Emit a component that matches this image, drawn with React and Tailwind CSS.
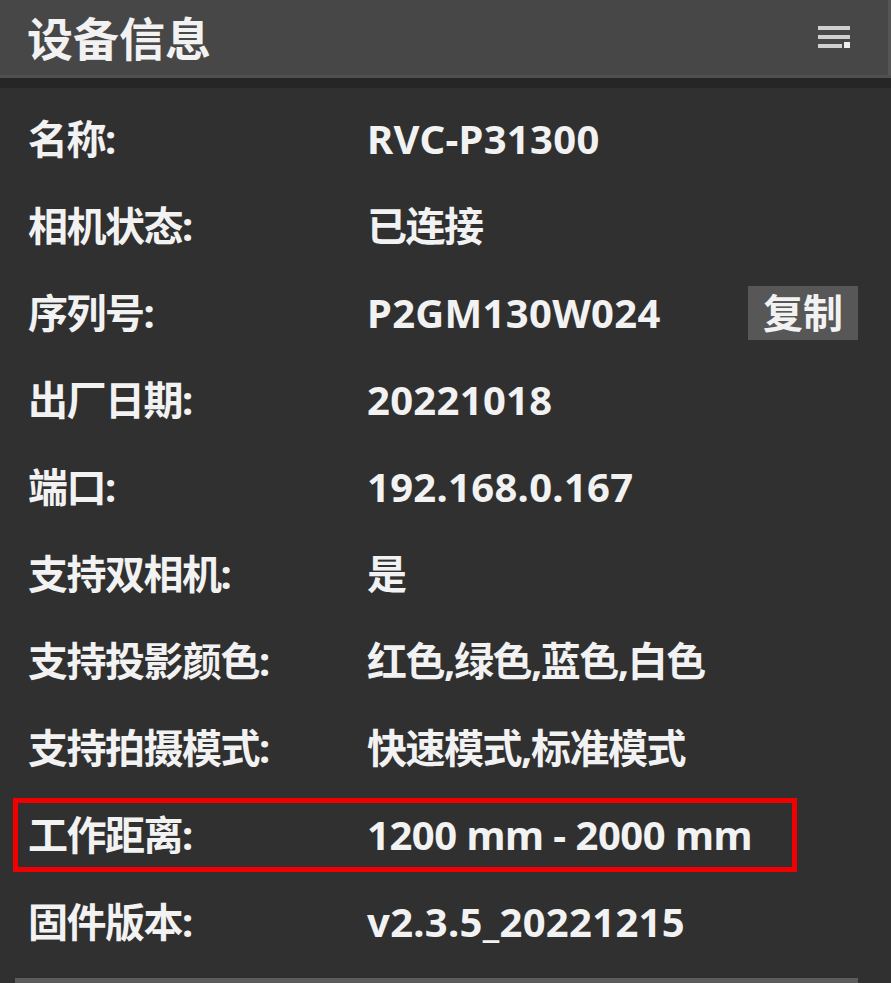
import React from 'react';

const rows = [
  { label: '名称:', value: 'RVC-P31300' },
  { label: '相机状态:', value: '已连接', cjk: true },
  { label: '序列号:', value: 'P2GM130W024', copy: true },
  { label: '出厂日期:', value: '20221018' },
  { label: '端口:', value: '192.168.0.167' },
  { label: '支持双相机:', value: '是', cjk: true },
  { label: '支持投影颜色:', value: '红色,绿色,蓝色,白色', cjk: true },
  { label: '支持拍摄模式:', value: '快速模式,标准模式', cjk: true },
  { label: '工作距离:', value: '1200 mm - 2000 mm', highlight: true },
  { label: '固件版本:', value: 'v2.3.5_20221215' },
];

const font = { fontFamily: '"Noto Sans", "Noto Sans CJK SC", sans-serif' };

const App = () => {
  return (
    <div className="w-[891px] h-[983px] overflow-hidden bg-[#303030] text-[#f2f2f2] font-bold" style={font}>
      <div className="h-[75px] bg-[#474747] border-r-[3px] border-[#555] flex items-center justify-between pl-[27px] pr-[38px]">
        <h1 className="text-[46px] leading-none">设备信息</h1>
        <svg width="32" height="26" viewBox="0 0 32 26" className="text-[#d0d0d0]">
          <rect x="0" y="1" width="32" height="4" fill="currentColor" />
          <rect x="0" y="10" width="32" height="4" fill="currentColor" />
          <rect x="0" y="19" width="24" height="4" fill="currentColor" />
          <rect x="26" y="17" width="6" height="6" fill="#eeeeee" />
        </svg>
      </div>
      <div className="h-[3px] bg-[#505050]" />
      <div className="h-[10px] bg-[#262626]" />
      <div className="pt-[7px]">
        {rows.map((row) => {
          const valueClass = row.cjk ? 'tracking-[-1.5px]' : 'tracking-[0.3px]';
          return (
            <div key={row.label} className="h-[87px] flex items-center text-[40px]">
              {row.highlight ? (
                <div className="ml-[13px] w-[784px] h-[74px] border-[5px] border-[#f00000] flex items-center pl-[10px]">
                  <span className="w-[339px] shrink-0 tracking-[-1.5px]">{row.label}</span>
                  <span className="tracking-[-0.5px]">{row.value}</span>
                </div>
              ) : (
                <div className="mx-[28px] flex-1 flex items-center">
                  <span className="w-[339px] shrink-0 tracking-[-1.5px]">{row.label}</span>
                  <span className={'flex-1 ' + valueClass}>{row.value}</span>
                  {row.copy && (
                    <span className="bg-[#575757] px-[15px] h-[54px] mr-[5px] flex items-center">复制</span>
                  )}
                </div>
              )}
            </div>
          );
        })}
      </div>
      <div className="ml-[15px] mt-[13px] h-[10px] w-[843px] bg-[#5c5c5c]" />
    </div>
  );
};

export default App;
